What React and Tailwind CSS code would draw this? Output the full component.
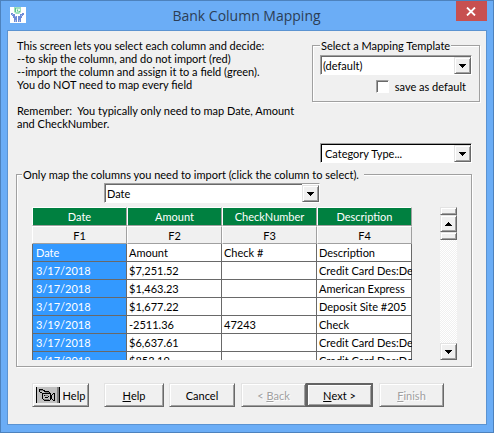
import React, { useState } from "react";

const headers = ["Date", "Amount", "CheckNumber", "Description"];

const rows = [
  ["Date", "Amount", "Check #", "Description"],
  ["3/17/2018", "$7,251.52", "", "Credit Card Des:De"],
  ["3/17/2018", "$1,463.23", "", "American Express"],
  ["3/17/2018", "$1,677.22", "", "Deposit Site #205"],
  ["3/19/2018", "-2511.36", "47243", "Check"],
  ["3/17/2018", "$6,637.61", "", "Credit Card Des:De"],
  ["3/17/2018", "$853.19", "", "Credit Card Des:De"],
];

const raised =
  "border border-t-[#e3e3e3] border-l-[#e3e3e3] border-r-[#696969] border-b-[#696969] bg-[#f0f0f0] shadow-[inset_1px_1px_0_#fff,inset_-1px_-1px_0_#a0a0a0]";
const raisedDefault =
  "border-2 border-[#646464] bg-[#f0f0f0] shadow-[inset_1px_1px_0_#fff,inset_-1px_-1px_0_#a0a0a0]";
const sunken =
  "border border-t-[#a0a0a0] border-l-[#a0a0a0] border-r-white border-b-white bg-white";
const etched =
  "min-w-0 border border-[#a0a0a0] shadow-[1px_1px_0_#fff,inset_1px_1px_0_#fff]";

const Arrow = ({ up }) => (
  <svg width="7" height="4" viewBox="0 0 7 4" shapeRendering="crispEdges" aria-hidden="true">
    <path d={up ? "M3 0h1v1h1v1h1v1h1v1H0V3h1V2h1V1h1z" : "M0 0h7v1H6v1H5v1H4v1H3V3H2V2H1V1H0z"} />
  </svg>
);

const Logo = () => (
  <svg width="16" height="16" viewBox="0 0 16 16" aria-hidden="true">
    <path fill="#fff" d="M0 0h16v16H0z" />
    <path fill="#9fe0bd" d="M4 0h7v5L9 7H6L4 5z" />
    <path fill="#e4f8ee" d="M6 2h1v3H6zM8 2h2v2H8z" />
    <path fill="#58c58c" d="M5 1h1v4H5zM7 3h1v1H7zM9 4h1v1H9z" />
    <path fill="#6d8cd8" d="M1 6h2v1h2v2h2v6H4v-4H3V9H2V8H1zM12 6h2v2h-1v1h-1v2h-1v4H8V9h2V7h2z" />
    <path fill="#a9bdea" d="M2 7h1v1H2zM5 9h1v1H5zM11 8h1v1h-1zM5 13h1v2H5zM9 13h1v2H9z" />
  </svg>
);

const Camera = () => (
  <svg width="24" height="16" viewBox="0 0 24 16" shapeRendering="crispEdges" aria-hidden="true">
    <path fill="#c0c0c0" d="M0 0h24v16H0z" />
    <path fill="#808080" d="M21 0h2v16h-2z" />
    <path d="M0 0h1v16H0zM23 0h1v16h-1z" />
    <path d="M3 2h4v1H3zM3 3h1v2H3zM7 3h2v1H7zM4 5h2v1H4zM8 4h5v1H8zM13 5h1v1h-1zM7 6h7v1H7zM6 6h1v6H6zM14 6h1v7h-1zM7 12h1v1H7zM8 13h6v1H8z" />
    <path fill="#808080" d="M4 3h3v1H4zM9 5h4v1H9zM9 8h3v1H9zM8 12h5v1H8z" />
    <path d="M8 8h1v1H8zM12 9h1v1h-1zM9 10h3v1H9zM15 8h1v4h-1zM16 7h1v1h-1zM16 12h1v1h-1zM17 6h2v1h-2zM17 13h2v1h-2zM18 7h1v6h-1z" />
  </svg>
);

const DropDown = ({ label, value, inner, pad }) => (
  <div className={`relative h-5 ${sunken}`}>
    <select
      aria-label={label}
      defaultValue={value}
      className={`block h-full w-full appearance-none border-t border-l bg-white pr-5 outline-none ${inner} ${pad}`}
    >
      <option>{value}</option>
    </select>
    <span className={`pointer-events-none absolute top-px right-0 bottom-0 flex w-[17px] items-center justify-center ${raised}`}>
      <Arrow />
    </span>
  </div>
);

const PushButton = ({ children, width, disabled, primary }) => (
  <button
    type="button"
    disabled={disabled}
    className={`flex h-6 items-center justify-center disabled:text-[#a0a0a0] disabled:[text-shadow:1px_1px_0_#fff] ${width} ${
      primary ? raisedDefault : raised
    }`}
  >
    {children}
  </button>
);

const App = () => {
  const [field, setField] = useState("Date");

  return (
    <div className="flex min-h-screen flex-col border border-[#4d82bd] bg-[#6badf6] pb-[7px] font-[Lato,Arial,sans-serif] text-[11px] leading-[13px] text-black">
      <header className="flex h-[29px] items-start justify-between pl-[9px] pr-[6px]">
        <span className="w-[27px] pt-[6px]">
          <Logo />
        </span>
        <h1 className="pt-[3px] font-['Open_Sans',sans-serif] text-[14px] leading-6 text-[#2c3e55]">
          Bank Column Mapping
        </h1>
        <button
          type="button"
          aria-label="Close"
          className="flex h-5 w-[31px] items-center justify-center bg-[#c75050]"
        >
          <svg width="10" height="9" viewBox="0 0 10 9" stroke="#fff" strokeWidth="1.8" aria-hidden="true">
            <path d="M1 .5l8 8M9 .5l-8 8" />
          </svg>
        </button>
      </header>

      <main className="mx-[6px] flex-1 border border-[#5b93d1] bg-[#f0f0f0] pt-2 pr-[6px] pb-[16px] pl-2">
        <section className="flex justify-between">
          <div className="pl-px">
            <p>This screen lets you select each column and decide:</p>
            <p>--to skip the column, and do not import (red)</p>
            <p>--import the column and assign it to a field (green).</p>
            <p>You do NOT need to map every field</p>
            <p className="mt-[13px] whitespace-pre">Remember:{"  "}You typically only need to map Date, Amount</p>
            <p>and CheckNumber.</p>
          </div>

          <div className="w-[168px]">
            <fieldset className={`px-[7px] pb-2 ${etched}`}>
              <legend className="bg-[#f0f0f0] px-px">Select a Mapping Template</legend>
              <div className="pt-[3px]">
                <DropDown label="Mapping template" value="(default)" inner="border-[#696969]" pad="pl-px" />
              </div>
              <label className="mt-[5px] flex items-center justify-end gap-[6px] pr-[6px]">
                <input
                  type="checkbox"
                  className={`size-[13px] appearance-none shadow-[inset_1px_1px_0_#696969] ${sunken}`}
                />
                save as default
              </label>
            </fieldset>
            <div className="mt-[41px] px-2">
              <DropDown label="Category type" value="Category Type..." inner="border-black" pad="pl-[3px]" />
            </div>
          </div>
        </section>

        <fieldset className={`mt-[5px] mr-2 pr-[14px] pb-[6px] pl-[15px] ${etched}`}>
          <legend className="-ml-[10px] bg-[#f0f0f0] pr-[5px] pl-px">
            Only map the columns you need to import (click the column to select).
          </legend>
          <div className={`mt-[2px] ml-[72px] flex h-5 w-[216px] ${sunken}`}>
            <input
              aria-label="Field for selected column"
              value={field}
              onChange={(e) => setField(e.target.value)}
              autoFocus
              className="min-w-0 flex-1 border-t border-l border-[#696969] pl-px outline-none"
            />
            <button
              type="button"
              aria-label="Show fields"
              className={`mt-px flex w-[17px] items-center justify-center ${raised}`}
            >
              <Arrow />
            </button>
          </div>

          <div className="mt-1 flex h-[153px] gap-7">
            <div className="min-w-0 flex-1 overflow-hidden">
              <table className="w-full table-fixed border-separate border-spacing-0">
                <thead>
                  <tr>
                    {headers.map((h) => (
                      <th
                        key={h}
                        className="h-[19px] border border-white border-r-[#a0a0a0] border-b-[#a0a0a0] bg-[#008040] p-0 text-center font-normal text-white"
                      >
                        {h}
                      </th>
                    ))}
                  </tr>
                  <tr>
                    {headers.map((h, i) => (
                      <th
                        key={h}
                        className="h-[18px] border border-white border-r-[#a0a0a0] border-b-[#a0a0a0] p-0 text-center font-normal"
                      >
                        F{i + 1}
                      </th>
                    ))}
                  </tr>
                </thead>
                <tbody>
                  {rows.map((row, r) => (
                    <tr key={r}>
                      {row.map((cell, c) => (
                        <td
                          key={c}
                          className={`h-[18px] border-r border-b border-[#696969] p-0 whitespace-nowrap ${
                            c === 0 ? "border-l bg-[#3399ff] pl-[3px] text-white" : "bg-white pl-[2px]"
                          }`}
                        >
                          {cell}
                        </td>
                      ))}
                    </tr>
                  ))}
                </tbody>
              </table>
            </div>

            <div className="flex w-[17px] flex-col bg-[repeating-conic-gradient(#ffffff_0_25%,#f0f0f0_0_50%)] bg-[length:2px_2px]">
              <div className={`h-2 ${raised}`} />
              <button
                type="button"
                aria-label="Scroll up"
                className={`flex h-[17px] items-center justify-center ${raised}`}
              >
                <Arrow up />
              </button>
              <div className={`h-2 ${raised}`} />
              <div className="flex-1" />
              <button
                type="button"
                aria-label="Scroll down"
                className={`flex h-[17px] items-center justify-center ${raised}`}
              >
                <Arrow />
              </button>
            </div>
          </div>
        </fieldset>

        <footer className="mt-4 flex pl-4">
          <PushButton width="w-[57px]">
            <Camera />
            <span className="pl-[3px]">Help</span>
          </PushButton>
          <div className="ml-[15px] flex gap-[5px]">
            <PushButton width="w-[60px]">
              <u>H</u>elp
            </PushButton>
            <PushButton width="w-[66px]">Cancel</PushButton>
          </div>
          <div className="ml-[6px] flex">
            <PushButton width="w-[65px]" disabled>
              &lt;&nbsp;<u>B</u>ack
            </PushButton>
            <PushButton width="w-[67px]" primary>
              <u>N</u>ext&nbsp;&gt;
            </PushButton>
          </div>
          <div className="ml-[6px]">
            <PushButton width="w-[65px]" disabled>
              <u>F</u>inish
            </PushButton>
          </div>
        </footer>
      </main>
    </div>
  );
};

export default App;
